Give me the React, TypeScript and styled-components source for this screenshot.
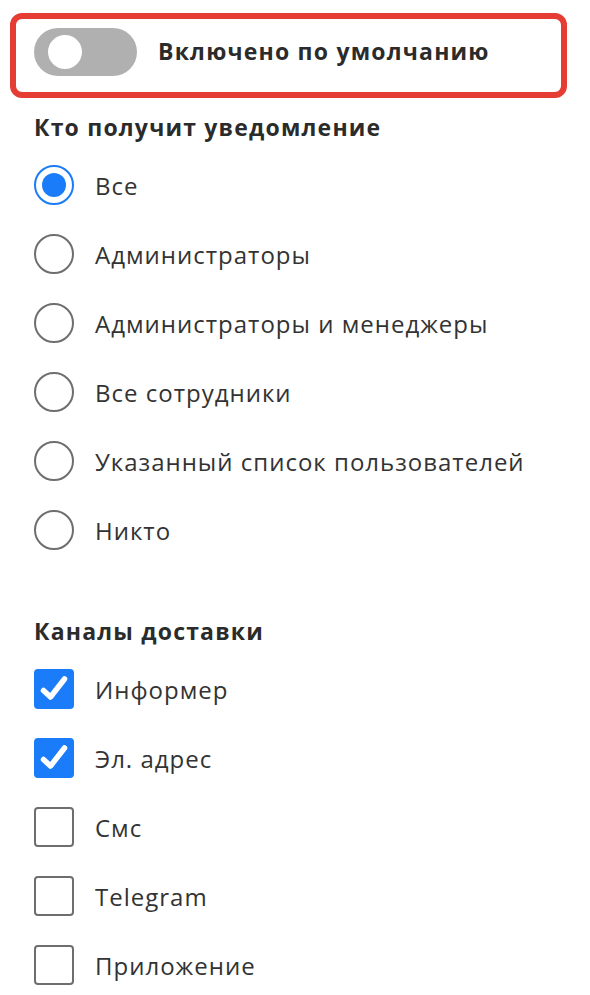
import React, { useState } from "react";
import styled, { createGlobalStyle } from "styled-components";

const GlobalStyle = createGlobalStyle`
  body {
    margin: 0;
    background: #fff;
    font-family: "Open Sans", "Liberation Sans", sans-serif;
    color: #333;
  }
`;

const recipients = [
  "Все",
  "Администраторы",
  "Администраторы и менеджеры",
  "Все сотрудники",
  "Указанный список пользователей",
  "Никто",
];

const channels = [
  { label: "Информер", checked: true },
  { label: "Эл. адрес", checked: true },
  { label: "Смс", checked: false },
  { label: "Telegram", checked: false },
  { label: "Приложение", checked: false },
];

function App() {
  const [enabled, setEnabled] = useState(false);
  const [who, setWho] = useState(0);
  const [checks, setChecks] = useState(channels.map(c => c.checked));

  return (
    <Page>
      <GlobalStyle />
      <ToggleBox>
        <Track on={enabled} onClick={() => setEnabled(!enabled)}>
          <Knob on={enabled} />
        </Track>
        <ToggleLabel>Включено по умолчанию</ToggleLabel>
      </ToggleBox>

      <Section>
        <Heading>Кто получит уведомление</Heading>
        <List>
          {recipients.map((r, i) => (
            <Row key={r} onClick={() => setWho(i)}>
              <Radio selected={who === i} />
              <RowLabel>{r}</RowLabel>
            </Row>
          ))}
        </List>
      </Section>

      <Section spaced>
        <Heading>Каналы доставки</Heading>
        <List>
          {channels.map((c, i) => (
            <Row
              key={c.label}
              onClick={() => setChecks(checks.map((v, j) => (j === i ? !v : v)))}
            >
              <Check checked={checks[i]}>
                {checks[i] && (
                  <svg width="36" height="36" viewBox="2 2 36 36">
                    <path
                      d="M9.5 21.5l7 6.5L30.5 10"
                      fill="none"
                      stroke="#fff"
                      strokeWidth="5.5"
                      strokeLinecap="round"
                      strokeLinejoin="round"
                    />
                  </svg>
                )}
              </Check>
              <RowLabel>{c.label}</RowLabel>
            </Row>
          ))}
        </List>
      </Section>
    </Page>
  );
}

const Page = styled.div`
  padding: 13px 23px 0 10px;
`;

const ToggleBox = styled.div`
  box-sizing: border-box;
  height: 85px;
  border: 6px solid #e53c33;
  border-radius: 12px;
  display: flex;
  align-items: flex-start;
  padding: 9px 0 0 18px;
  gap: 21px;
`;

interface IOn {
  on: boolean;
}

const Track = styled.div<IOn>`
  position: relative;
  width: 103px;
  height: 48px;
  border-radius: 24px;
  background: ${props => (props.on ? "#1a7cf9" : "#b0b0b0")};
  cursor: pointer;
  flex-shrink: 0;
`;

const Knob = styled.div<IOn>`
  position: absolute;
  top: 7px;
  left: ${props => (props.on ? "55px" : "14px")};
  width: 34px;
  height: 34px;
  border-radius: 50%;
  background: #fff;
  transition: 0.2s;
`;

const ToggleLabel = styled.span`
  font-size: 23px;
  line-height: 46px;
  font-weight: 700;
  letter-spacing: 1.2px;
  color: #2b2b2b;
`;

interface ISection {
  spaced?: boolean;
}

const Section = styled.div<ISection>`
  margin-top: ${props => (props.spaced ? "51.5px" : "14px")};
  padding-left: 24px;
`;

const Heading = styled.div`
  font-size: 23px;
  font-weight: 700;
  letter-spacing: 1.2px;
  line-height: 30px;
  color: #2b2b2b;
`;

const List = styled.div`
  margin-top: 8.5px;
  display: flex;
  flex-direction: column;
`;

const Row = styled.div`
  height: 69px;
  display: flex;
  align-items: center;
  gap: 21px;
  cursor: pointer;
`;

const RowLabel = styled.span`
  font-size: 24px;
  letter-spacing: 1px;
  color: #333;
`;

interface IRadio {
  selected: boolean;
}

const Radio = styled.div<IRadio>`
  box-sizing: border-box;
  width: 40px;
  height: 40px;
  border-radius: 50%;
  border: 2px solid ${props => (props.selected ? "#1a7cf9" : "#6e6e6e")};
  display: flex;
  align-items: center;
  justify-content: center;
  flex-shrink: 0;

  &::after {
    content: "";
    display: ${props => (props.selected ? "block" : "none")};
    width: 24px;
    height: 24px;
    border-radius: 50%;
    background: #1a7cf9;
  }
`;

interface ICheck {
  checked: boolean;
}

const Check = styled.div<ICheck>`
  box-sizing: border-box;
  width: 40px;
  height: 40px;
  border-radius: 4px;
  border: 2px solid ${props => (props.checked ? "#1a7cf9" : "#6e6e6e")};
  background: ${props => (props.checked ? "#1a7cf9" : "#fff")};
  display: flex;
  align-items: center;
  justify-content: center;
  flex-shrink: 0;
`;

export default App;
